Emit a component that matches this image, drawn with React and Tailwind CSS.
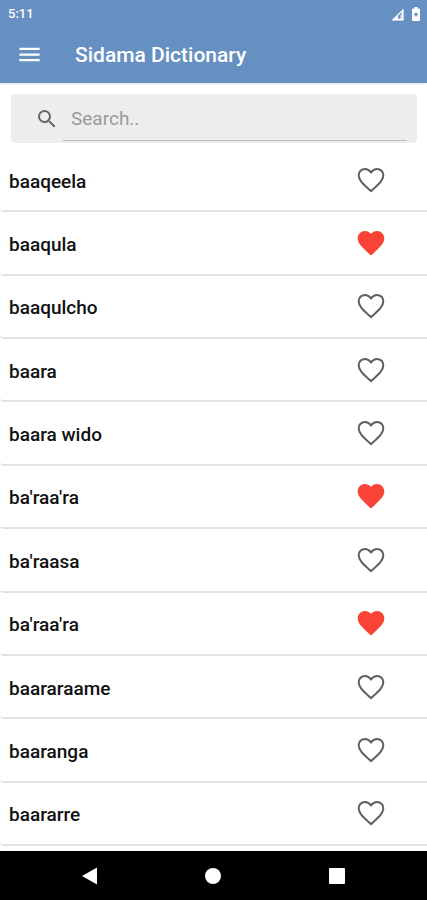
import React, { useState } from 'react';
import { MdFavorite, MdMenu, MdSearch } from 'react-icons/md';

const WORDS = [
  { id: 1, text: 'baaqeela', favorite: false },
  { id: 2, text: 'baaqula', favorite: true },
  { id: 3, text: 'baaqulcho', favorite: false },
  { id: 4, text: 'baara', favorite: false },
  { id: 5, text: 'baara wido', favorite: false },
  { id: 6, text: 'ba′raa′ra', favorite: true },
  { id: 7, text: 'ba′raasa', favorite: false },
  { id: 8, text: 'ba′raa′ra', favorite: true },
  { id: 9, text: 'baararaame', favorite: false },
  { id: 10, text: 'baaranga', favorite: false },
  { id: 11, text: 'baararre', favorite: false },
];

function StatusBar() {
  return (
    <div className="flex h-7 items-center justify-between pl-2 pr-1.5 text-white">
      <span className="text-[13px] font-medium leading-5">5:11</span>
      <div className="flex items-center gap-1.5">
        <svg className="size-[15px]" viewBox="0 0 16 16" aria-hidden="true">
          <path d="M1.5 14.5 14.5 1.5v13z" fill="currentColor" />
          <path d="M8.5 12.5V9.200l4-4v7.300z" fill="#6690c2" />
          <path d="M10.500 12.500V9l2-2v5.500z" fill="currentColor" opacity="0.6" />
        </svg>
        <svg className="h-4 w-2.5" viewBox="0 0 10 16" aria-hidden="true">
          <path d="M3.500 1h3v1.500H8q1 0 1 1V14q0 1-1 1H2q-1 0-1-1V3.500q0-1 1-1h1.500z" fill="currentColor" />
          <path d="M5 6.500v4M3 8.500h4" stroke="#6690c2" strokeWidth="1.300" />
        </svg>
      </div>
    </div>
  );
}

function HeartOutline({ className }) {
  return (
    <svg className={className} viewBox="0 0 24 24" fill="none" stroke="currentColor" strokeWidth="1.5" aria-hidden="true">
      <path d="M12 20.300l-.95-.86C5.900 14.800 2.750 11.950 2.750 8.500c0-2.700 2.050-4.750 4.750-4.750 1.500 0 3.050.700 4.500 2.500 1.450-1.800 3-2.500 4.500-2.500 2.700 0 4.750 2.050 4.750 4.750 0 3.450-3.150 6.300-8.300 10.940z" />
    </svg>
  );
}

function NavigationBar() {
  return (
    <nav className="flex h-[49px] items-center justify-around bg-black px-7 text-white">
      <button type="button" aria-label="Back">
        <svg className="h-5 w-5" viewBox="0 0 20 20" aria-hidden="true">
          <path d="M2 10 17 1.500v17z" fill="currentColor" />
        </svg>
      </button>
      <button type="button" aria-label="Home">
        <svg className="h-5 w-5" viewBox="0 0 20 20" aria-hidden="true">
          <circle cx="10" cy="10" r="8" fill="currentColor" />
        </svg>
      </button>
      <button type="button" aria-label="Recent apps">
        <svg className="h-5 w-5" viewBox="0 0 20 20" aria-hidden="true">
          <rect x="2" y="2" width="16" height="16" rx="1" fill="currentColor" />
        </svg>
      </button>
    </nav>
  );
}

function WordRow({ word, onToggle }) {
  return (
    <li className="flex items-center justify-between rounded-bl border-b-2 border-[#e2e2e2] pl-[9px] pr-10">
      <span className="pt-1 text-[19px] font-medium leading-6 text-[#111111]">{word.text}</span>
      <button
        type="button"
        aria-label={`Favorite ${word.text}`}
        aria-pressed={word.favorite}
        onClick={() => onToggle(word.id)}
      >
        {word.favorite ? (
          <MdFavorite className="size-8 text-[#f94336]" />
        ) : (
          <HeartOutline className="size-8 text-[#5f5f5f]" />
        )}
      </button>
    </li>
  );
}

export default function App() {
  const [words, setWords] = useState(WORDS);
  const [query, setQuery] = useState('');

  const toggleFavorite = (id) => {
    setWords(words.map((w) => (w.id === id ? { ...w, favorite: !w.favorite } : w)));
  };

  const visible = words.filter((w) => w.text.includes(query.trim().toLowerCase()));

  return (
    <div className="flex min-h-screen flex-col bg-white font-[Roboto,sans-serif]">
      <header className="bg-[#6690c2] text-white shadow-sm">
        <StatusBar />
        <div className="flex h-[55px] items-center gap-8 pb-0.5 pl-4">
          <button type="button" aria-label="Open menu">
            <MdMenu className="size-[27px]" />
          </button>
          <h1 className="text-[21px] font-medium leading-7">Sidama Dictionary</h1>
        </div>
      </header>

      <main className="flex flex-1 flex-col pb-[5px]">
        <div className="mb-1.5 ml-[11px] mr-2.5 mt-[11px] flex h-[49px] items-center rounded bg-[#ededed] pl-6 pr-2.5">
          <label htmlFor="search">
            <MdSearch className="size-6 text-[#666666]" aria-label="Search" />
          </label>
          <input
            id="search"
            type="text"
            value={query}
            onChange={(e) => setQuery(e.target.value)}
            placeholder="Search.."
            className="ml-1 h-[45px] min-w-0 flex-1 border-b border-[#bdbdbd] bg-transparent px-2 text-[19px] text-gray-800 outline-none placeholder:text-[#9a9a9a]"
          />
        </div>
        <ul className="grid flex-1 auto-rows-fr">
          {visible.map((word) => (
            <WordRow key={word.id} word={word} onToggle={toggleFavorite} />
          ))}
        </ul>
      </main>

      <NavigationBar />
    </div>
  );
}
